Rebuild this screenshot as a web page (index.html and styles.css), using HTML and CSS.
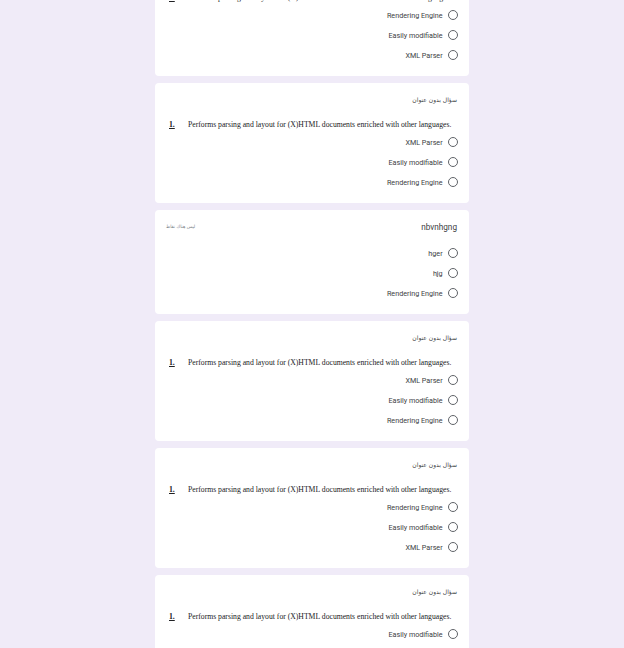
FILE: index.html
```html
<!DOCTYPE html>
<html lang="ar">
<head>
<meta charset="utf-8">
<link rel="stylesheet" href="styles.css">
</head>
<body>
<main class="page">
  <section class="card">
    <div class="head"><span class="title">سؤال بدون عنوان</span></div>
    <p class="question"><span class="num">1.</span><span>Performs parsing and layout for (X)HTML documents enriched with other languages.</span></p>
    <ul class="options">
      <li class="opt"><span>Rendering Engine</span><i class="radio"></i></li>
      <li class="opt"><span>Easily modifiable</span><i class="radio"></i></li>
      <li class="opt"><span>XML Parser</span><i class="radio"></i></li>
    </ul>
  </section>
  <section class="card">
    <div class="head"><span class="title">سؤال بدون عنوان</span></div>
    <p class="question"><span class="num">1.</span><span>Performs parsing and layout for (X)HTML documents enriched with other languages.</span></p>
    <ul class="options">
      <li class="opt"><span>XML Parser</span><i class="radio"></i></li>
      <li class="opt"><span>Easily modifiable</span><i class="radio"></i></li>
      <li class="opt"><span>Rendering Engine</span><i class="radio"></i></li>
    </ul>
  </section>
  <section class="card">
    <div class="head head-split"><span class="points">ليس هناك نقاط</span><span class="title-latin">nbvnhgng</span></div>
    <ul class="options options-wide">
      <li class="opt"><span>hger</span><i class="radio"></i></li>
      <li class="opt"><span>hjg</span><i class="radio"></i></li>
      <li class="opt"><span>Rendering Engine</span><i class="radio"></i></li>
    </ul>
  </section>
  <section class="card">
    <div class="head"><span class="title">سؤال بدون عنوان</span></div>
    <p class="question"><span class="num">1.</span><span>Performs parsing and layout for (X)HTML documents enriched with other languages.</span></p>
    <ul class="options">
      <li class="opt"><span>XML Parser</span><i class="radio"></i></li>
      <li class="opt"><span>Easily modifiable</span><i class="radio"></i></li>
      <li class="opt"><span>Rendering Engine</span><i class="radio"></i></li>
    </ul>
  </section>
  <section class="card">
    <div class="head"><span class="title">سؤال بدون عنوان</span></div>
    <p class="question"><span class="num">1.</span><span>Performs parsing and layout for (X)HTML documents enriched with other languages.</span></p>
    <ul class="options">
      <li class="opt"><span>Rendering Engine</span><i class="radio"></i></li>
      <li class="opt"><span>Easily modifiable</span><i class="radio"></i></li>
      <li class="opt"><span>XML Parser</span><i class="radio"></i></li>
    </ul>
  </section>
  <section class="card">
    <div class="head"><span class="title">سؤال بدون عنوان</span></div>
    <p class="question"><span class="num">1.</span><span>Performs parsing and layout for (X)HTML documents enriched with other languages.</span></p>
    <ul class="options">
      <li class="opt"><span>Easily modifiable</span><i class="radio"></i></li>
      <li class="opt"><span>XML Parser</span><i class="radio"></i></li>
      <li class="opt"><span>Rendering Engine</span><i class="radio"></i></li>
    </ul>
  </section>
</main>
</body>
</html>
```
FILE: styles.css
```css
html, body {
  margin: 0;
  padding: 0;
  background: #f0ebf8;
  height: 648px;
  overflow: hidden;
}
body {
  font-family: Roboto, "Noto Sans", sans-serif;
  color: #202124;
}
.page {
  width: 314px;
  margin: -44px auto 0;
  display: flex;
  flex-direction: column;
  gap: 7px;
}
.card {
  background: #fff;
  border-radius: 4px;
  padding: 11px 11px 11px 14px;
  display: flex;
  flex-direction: column;
}
.head {
  height: 12px;
  line-height: 12px;
  display: flex;
  justify-content: flex-end;
  align-items: center;
  padding-right: 1px;
}
.head-split {
  justify-content: space-between;
}
.title {
  direction: rtl;
  font-family: "DejaVu Sans", "Noto Sans", sans-serif;
  font-size: 6px;
  color: #3c4043;
}
.title-latin {
  font-family: Roboto, sans-serif;
  font-size: 8.2px;
  color: #3c4043;
}
.points {
  direction: rtl;
  font-family: "DejaVu Sans", sans-serif;
  font-size: 4.5px;
  color: #80868b;
  margin-left: -3px;
}
.question {
  margin: 14px 0 0;
  height: 10px;
  line-height: 10px;
  font-family: "Liberation Serif", "Times New Roman", serif;
  font-size: 7.7px;
  color: #202124;
  display: flex;
  white-space: nowrap;
}
.num {
  font-weight: bold;
  text-decoration: underline;
  width: 19px;
  flex: none;
}
.options {
  list-style: none;
  margin: 2px 0 0;
  padding: 0;
  display: flex;
  flex-direction: column;
}
.options-wide {
  margin-top: 10px;
}
.opt {
  height: 20px;
  display: flex;
  justify-content: flex-end;
  align-items: center;
  gap: 5px;
  font-size: 7.2px;
  color: #3c4043;
}
.radio {
  display: block;
  width: 8.4px;
  height: 8.4px;
  border: 1.1px solid #5f6368;
  border-radius: 50%;
}
```
